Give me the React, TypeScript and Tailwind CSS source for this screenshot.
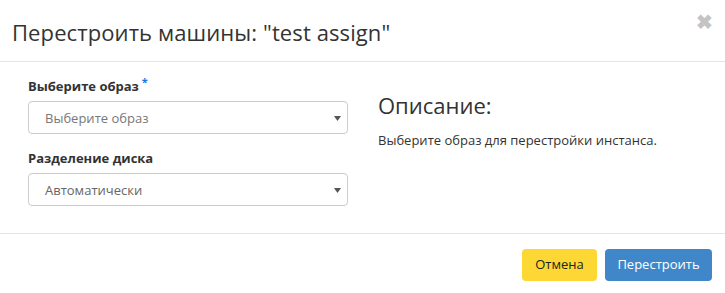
import React from "react";

function Caret() {
  return (
    <svg width="7" height="5" viewBox="0 0 7 5" className="absolute right-[6px] top-[14px]">
      <path d="M0 0 H7 L3.5 5 Z" fill="#555" />
    </svg>
  );
}

function Select({ text, muted }: { text: string; muted?: boolean }) {
  return (
    <div className="relative h-[33px] w-[320px] rounded-[4px] border border-[#cccccc] bg-white">
      <div className={`pl-[16px] pt-[7px] text-[13px] leading-[18px] ${muted ? "text-[#777]" : "text-[#666]"}`}>{text}</div>
      <Caret />
    </div>
  );
}

export default function App() {
  return (
    <div
      className="flex h-[293px] w-[725px] flex-col bg-white text-[#333]"
      style={{ fontFamily: '"Open Sans", "Liberation Sans", sans-serif' }}
    >
      <div className="relative flex h-[62px] items-center border-b border-[#e5e5e5] pl-[12px]">
        <h4 className="pt-[2px] text-[22px] font-normal leading-[26px] tracking-[0.1px] text-[#333]">
          Перестроить машины: "test assign"
        </h4>
        <span className="absolute right-[12px] top-[12px] text-[20px] font-bold leading-[20px] text-[#c4c4c4]">
          ✖
        </span>
      </div>
      <div className="flex h-[172px] border-b border-[#e5e5e5] pl-[28px] pt-[16px]">
        <div className="flex w-[350px] flex-col">
          <label className="text-[13px] font-bold leading-[17px] text-[#333]">
            Выберите образ<sup className="ml-[3px] text-[11px] text-[#1a73e8]">*</sup>
          </label>
          <div className="mt-[6px]">
            <Select text="Выберите образ" muted />
          </div>
          <label className="mt-[16px] text-[13px] font-bold leading-[17px] text-[#333]">
            Разделение диска
          </label>
          <div className="mt-[6px]">
            <Select text="Автоматически" />
          </div>
        </div>
        <div className="flex flex-col pt-[14px]">
          <h3 className="text-[22px] font-normal leading-[26px] text-[#333]">Описание:</h3>
          <p className="mt-[13px] text-[13px] leading-[18px] text-[#333]">
            Выберите образ для перестройки инстанса.
          </p>
        </div>
      </div>
      <div className="flex justify-end gap-[8px] pr-[13px] pt-[15px]">
        <button className="h-[32px] w-[75px] rounded-[4px] bg-[#fdd835] text-[13px] text-[#222]">
          Отмена
        </button>
        <button className="h-[32px] w-[107px] rounded-[4px] bg-[#3f87c8] text-[13px] text-white">
          Перестроить
        </button>
      </div>
    </div>
  );
}
